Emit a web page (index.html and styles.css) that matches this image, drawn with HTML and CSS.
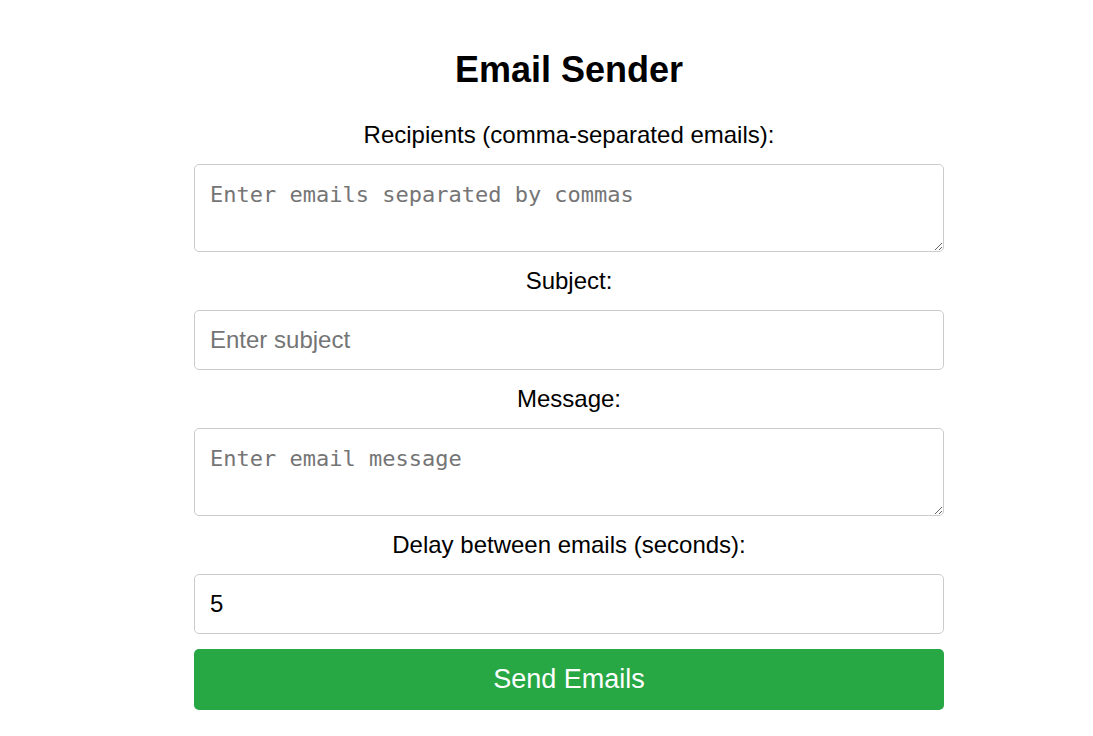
FILE: index.html
```html
<!DOCTYPE html>
<html lang="en">
<head>
<meta charset="utf-8">
<title>Email Sender</title>
<link rel="stylesheet" href="styles.css">
</head>
<body>
<div class="container">
  <h1 class="title">Email Sender</h1>
  <form class="form">
    <label class="label" for="recipients">Recipients (comma-separated emails):</label>
    <textarea class="field area" id="recipients" placeholder="Enter emails separated by commas"></textarea>
    <label class="label" for="subject">Subject:</label>
    <input class="field input" id="subject" type="text" placeholder="Enter subject">
    <label class="label" for="message">Message:</label>
    <textarea class="field area" id="message" placeholder="Enter email message"></textarea>
    <label class="label" for="delay">Delay between emails (seconds):</label>
    <input class="field input" id="delay" type="number" value="5">
    <button class="send" type="button">Send Emails</button>
  </form>
</div>
</body>
</html>
```

FILE: styles.css
```css
html, body {
  margin: 0;
  background: #ffffff;
}
body {
  padding-left: 45px;
  font-family: "Liberation Sans", Arial, sans-serif;
  color: #000;
}
.container {
  max-width: 750px;
  margin: 0 auto;
  padding-top: 49px;
  text-align: center;
}
.title {
  margin: 0;
  font-size: 36px;
  line-height: 42px;
  font-weight: bold;
}
.form {
  display: flex;
  flex-direction: column;
  margin-top: 32px;
}
.label {
  display: block;
  font-size: 24px;
  line-height: 24px;
  margin-bottom: 17px;
}
.field {
  display: block;
  box-sizing: border-box;
  width: 100%;
  border: 1px solid #cccccc;
  border-radius: 5px;
  padding: 15px;
  margin: 0 0 17px 0;
  background: #fff;
  color: #000;
  outline: none;
}
.area {
  height: 88px;
  font-family: "DejaVu Sans Mono", monospace;
  font-size: 22px;
  line-height: 28px;
  padding-top: 16px;
  resize: vertical;
}
.input {
  height: 60px;
  font-family: "Liberation Sans", Arial, sans-serif;
  font-size: 24px;
}
.field::placeholder {
  color: #757575;
}
.input[type=number] {
  -moz-appearance: textfield;
}
.input::-webkit-outer-spin-button,
.input::-webkit-inner-spin-button {
  -webkit-appearance: none;
  margin: 0;
}
.form .input:last-of-type {
  margin-bottom: 15px;
}
.send {
  display: block;
  width: 100%;
  height: 61px;
  border: none;
  border-radius: 5px;
  background: #28a745;
  color: #fff;
  font-family: "Liberation Sans", Arial, sans-serif;
  font-size: 27px;
  cursor: pointer;
}
```
